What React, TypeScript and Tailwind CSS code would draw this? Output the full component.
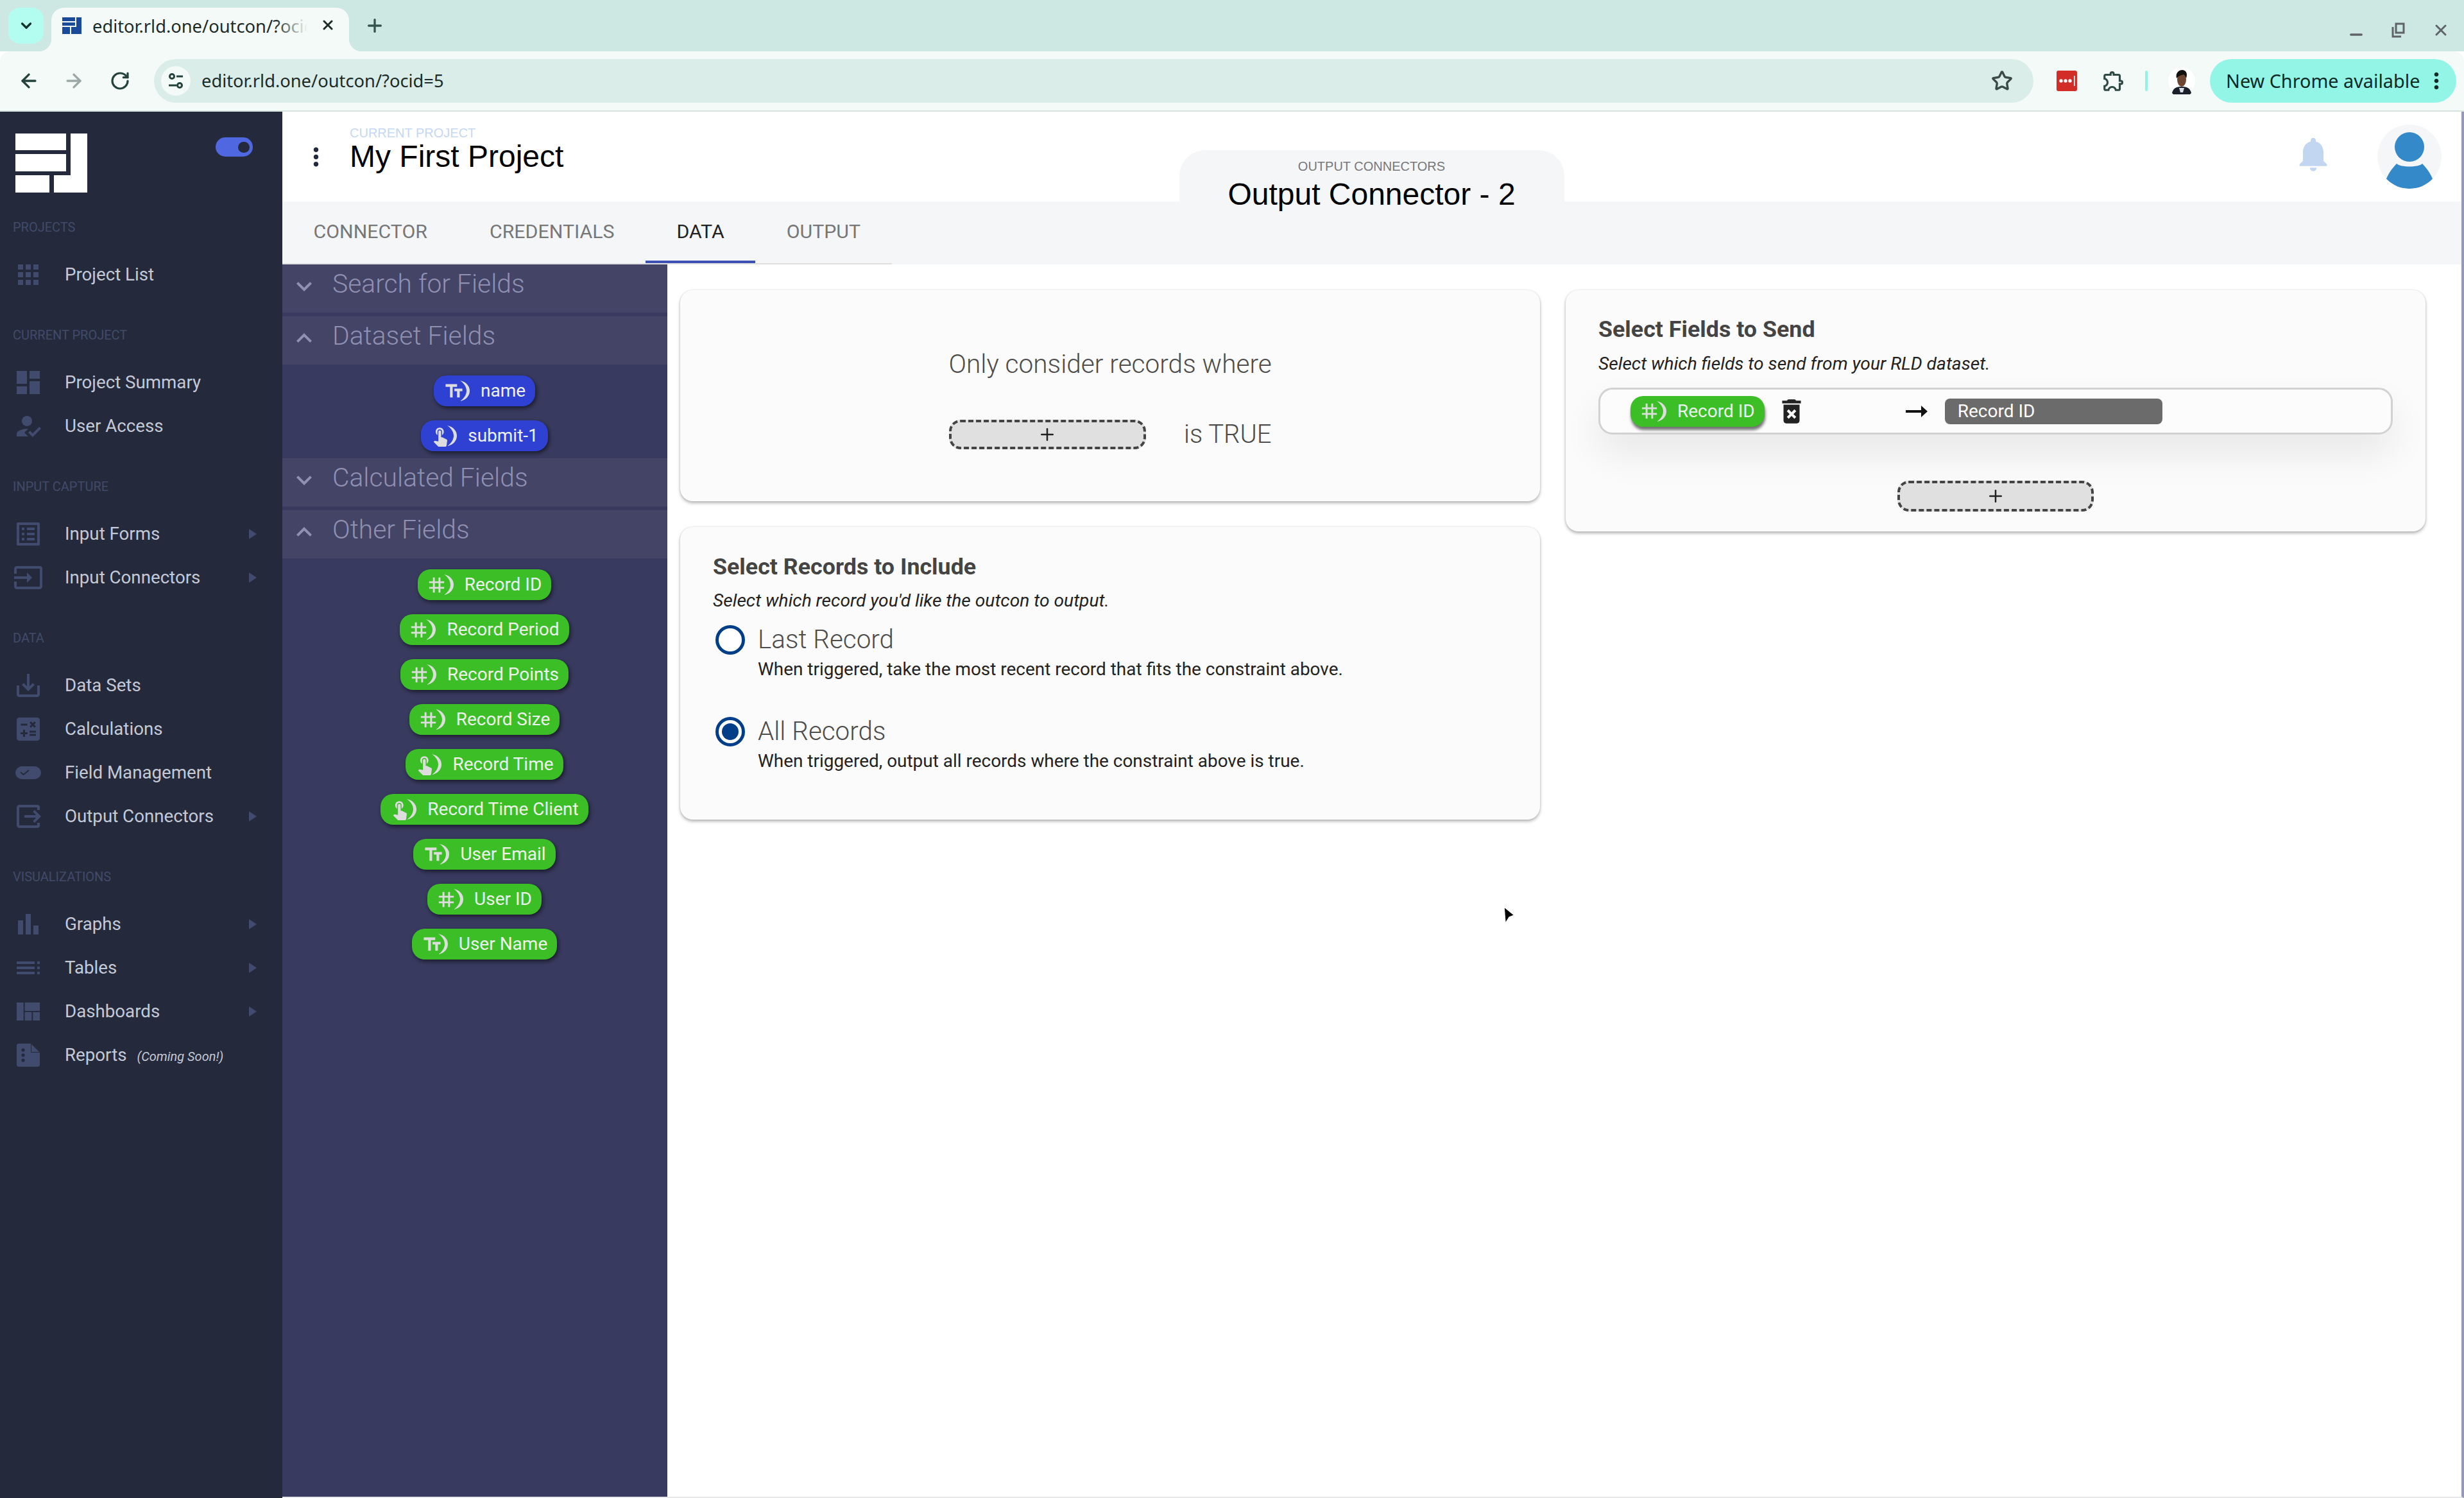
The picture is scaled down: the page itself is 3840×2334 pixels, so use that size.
import React from "react";
import {
  MdApps, MdDashboard, MdHowToReg, MdListAlt, MdInput, MdSaveAlt, MdCalculate, MdOutput,
  MdBarChart, MdViewQuilt, MdTextFields, MdTag, MdTouchApp, MdMoreVert, MdKeyboardArrowDown,
  MdKeyboardArrowUp, MdOutlineExtension, MdNotifications, MdDeleteForever,
} from "react-icons/md";
import { ArrowLeft, ArrowRight, RotateCw, Star, Plus, X, ChevronDown, Minus } from "lucide-react";

const Pill = () => (
  <svg width="40" height="20" viewBox="0 0 40 20" fill="none">
    <rect width="40" height="20" rx="10" fill="#414b6e" />
    <path d="M7 10l4.5 4L20 7" stroke="#242a3c" strokeWidth="1.8" transform="translate(1 -1)" />
  </svg>
);
const TableIcon = () => (
  <svg width="36" height="20" viewBox="0 0 36 20" fill="#414b6e">
    <rect width="28" height="4" x="0" y="0" />
    <rect width="28" height="4" x="0" y="8" />
    <rect width="28" height="4" x="0" y="16" />
    <rect width="4" height="4" x="32" y="0" />
    <rect width="4" height="4" x="32" y="8" />
    <rect width="4" height="4" x="32" y="16" />
  </svg>
);
const ReportIcon = () => (
  <svg width="36" height="36" viewBox="0 0 36 36">
    <path d="M3 0h19l14 14v19a3 3 0 0 1-3 3H3a3 3 0 0 1-3-3V3a3 3 0 0 1 3-3z" fill="#414b6e" />
    <path d="M22 0v14h14z" fill="#242a3c" />
    <path d="M23 1l12 12H23z" fill="#414b6e" />
    <circle cx="10" cy="10" r="2.6" fill="#242a3c" />
    <circle cx="10" cy="18" r="2.6" fill="#242a3c" />
    <circle cx="10" cy="26" r="2.6" fill="#242a3c" />
  </svg>
);

function NavIcon({ children }: { children: React.ReactNode }) {
  return <span className="flex w-[48px] h-[48px] shrink-0 items-center justify-center text-[#414b6e]">{children}</span>;
}

function NavRow({ icon, label, arrow, extra }: { icon: React.ReactNode; label: string; arrow?: boolean; extra?: string }) {
  return (
    <div className="flex h-[68px] items-center pl-[20px] pr-[40px]">
      <NavIcon>{icon}</NavIcon>
      <span className="ml-[33px] text-[27.7px] text-[#c4c9d6]">{label}</span>
      {extra && <span className="ml-[16px] mt-[4px] text-[20px] italic text-[#c4c9d6]">{extra}</span>}
      {arrow && (
        <svg className="ml-auto" width="12" height="16" viewBox="0 0 12 16">
          <path d="M0 0l12 8-12 8z" fill="#414b6e" />
        </svg>
      )}
    </div>
  );
}

function NavLabel({ text }: { text: string }) {
  return <div className="mb-[20px] flex h-[40px] items-center pl-[20px] text-[20px] text-[#414a68]">{text}</div>;
}

function Sidebar() {
  const s = 48;
  return (
    <aside className="flex w-[440px] shrink-0 flex-col bg-[#242a3c]">
      <div className="flex h-[160px] items-start justify-between pl-[24px] pr-[46px] pt-[34px]">
        <svg width="112" height="92" viewBox="0 0 112 92" fill="#fff">
          <rect x="0" y="0" width="79" height="26" />
          <rect x="0" y="32" width="79" height="27" />
          <rect x="0" y="65" width="53" height="27" />
          <path d="M86 0h26v92H60V65h26z" />
        </svg>
        <div className="mt-[6px] flex h-[30px] w-[58px] items-center justify-end rounded-full bg-[#4f67e0] pr-[5px]">
          <div className="h-[17px] w-[18px] rounded-full bg-[#242a3c]" />
        </div>
      </div>
      <div className="flex flex-col gap-[40px]">
        <section>
          <NavLabel text="PROJECTS" />
          <NavRow icon={<MdApps size={48} />} label="Project List" />
        </section>
        <section>
          <NavLabel text="CURRENT PROJECT" />
          <NavRow icon={<MdDashboard size={48} />} label="Project Summary" />
          <NavRow icon={<MdHowToReg size={48} />} label="User Access" />
        </section>
        <section>
          <NavLabel text="INPUT CAPTURE" />
          <NavRow icon={<MdListAlt size={s} />} label="Input Forms" arrow />
          <NavRow icon={<MdInput size={s} />} label="Input Connectors" arrow />
        </section>
        <section>
          <NavLabel text="DATA" />
          <NavRow icon={<MdSaveAlt size={s} />} label="Data Sets" />
          <NavRow icon={<MdCalculate size={s} />} label="Calculations" />
          <NavRow icon={<Pill />} label="Field Management" />
          <NavRow icon={<MdOutput size={s} />} label="Output Connectors" arrow />
        </section>
        <section>
          <NavLabel text="VISUALIZATIONS" />
          <NavRow icon={<MdBarChart size={s} />} label="Graphs" arrow />
          <NavRow icon={<TableIcon />} label="Tables" arrow />
          <NavRow icon={<MdViewQuilt size={s} />} label="Dashboards" arrow />
          <NavRow icon={<ReportIcon />} label="Reports" extra="(Coming Soon!)" />
        </section>
      </div>
    </aside>
  );
}

function ChipIcon({ kind }: { kind: "text" | "num" | "touch" }) {
  return (
    <span className="relative flex h-[36px] w-[38px] shrink-0 items-center text-[#dddddd]">
      {kind === "text" && <span className="-ml-[3px]"><MdTextFields size={33} /></span>}
      {kind === "num" && <span className="-ml-[6px]"><MdTag size={35} /></span>}
      {kind === "touch" && <span className="-ml-[5px]"><MdTouchApp size={34} /></span>}
      <svg className="absolute right-0 top-[2px]" width="16" height="32" viewBox="0 0 16 32">
        <path d="M1 0C11 2 16 9 16 16S11 30 1 32C7 28 11 22 11 16S7 4 1 0z" fill="#dddddd" />
      </svg>
    </span>
  );
}

function Chip({ label, kind, color, strong }: { label: string; kind: "text" | "num" | "touch"; color: string; strong?: boolean }) {
  return (
    <div
      className={`flex h-[48px] items-center rounded-[20px] pl-[18px] pr-[15px] ${color} ${
        strong ? "shadow-[1px_5px_4px_rgba(0,0,0,0.55)]" : "shadow-[2px_3px_6px_rgba(0,0,0,0.55)]"
      }`}
    >
      <ChipIcon kind={kind} />
      <span className="ml-[17px] whitespace-nowrap text-[28px] text-[#eef2ee]">{label}</span>
    </div>
  );
}

function PanelHead({ title, open }: { title: string; open?: boolean }) {
  return (
    <div className="flex h-[75px] items-start bg-[#434466] pl-[10px] text-[#8f90b2]">
      <span className="mt-[10px]">{open ? <MdKeyboardArrowUp size={48} /> : <MdKeyboardArrowDown size={48} />}</span>
      <span className="ml-[20px] mt-[6px] text-[40.8px] font-light leading-[48px]">{title}</span>
    </div>
  );
}

const BLUE = "bg-[#2f41d2]";
const GREEN = "bg-[#3cbf26]";

function FieldPanel() {
  return (
    <div className="w-[600px] shrink-0 bg-[#383a5f]">
      <PanelHead title="Search for Fields" />
      <div className="mt-[6px]">
        <PanelHead title="Dataset Fields" open />
      </div>
      <div className="flex h-[146px] flex-col items-center gap-[22px] pl-[30px] pt-[17px]">
        <Chip label="name" kind="text" color={BLUE} />
        <Chip label="submit-1" kind="touch" color={BLUE} />
      </div>
      <PanelHead title="Calculated Fields" />
      <div className="mt-[6px]">
        <PanelHead title="Other Fields" open />
      </div>
      <div className="flex flex-col items-center gap-[22px] pl-[30px] pt-[17px]">
        <Chip label="Record ID" kind="num" color={GREEN} />
        <Chip label="Record Period" kind="num" color={GREEN} />
        <Chip label="Record Points" kind="num" color={GREEN} />
        <Chip label="Record Size" kind="num" color={GREEN} />
        <Chip label="Record Time" kind="touch" color={GREEN} />
        <Chip label="Record Time Client" kind="touch" color={GREEN} />
        <Chip label="User Email" kind="text" color={GREEN} />
        <Chip label="User ID" kind="num" color={GREEN} />
        <Chip label="User Name" kind="text" color={GREEN} />
      </div>
    </div>
  );
}

function AddButton({ className }: { className: string }) {
  return (
    <div className={`flex items-center justify-center rounded-[18px] border-[4px] border-dashed border-[#444] bg-[#e0e0e0] text-[#222] ${className}`}>
      <Plus size={30} strokeWidth={2} />
    </div>
  );
}

function Radio({ title, desc, on }: { title: string; desc: string; on?: boolean }) {
  return (
    <div className="flex">
      <div className="ml-[4px] mt-[1px] flex h-[46px] w-[46px] shrink-0 items-center justify-center rounded-full border-[5px] border-[#003f88] bg-white">
        {on && <div className="h-[26px] w-[26px] rounded-full bg-[#003f88]" />}
      </div>
      <div className="ml-[20px]">
        <div className="text-[40.4px] font-light leading-[48px] text-[#4c4c4c]">{title}</div>
        <div className="text-[27.95px] leading-[44px] text-[#222]">{desc}</div>
      </div>
    </div>
  );
}

const cardCls = "w-[1340px] rounded-[20px] bg-[#fbfbfb] shadow-[0_3px_5px_rgba(0,0,0,0.28),0_0_3px_rgba(0,0,0,0.12)]";

function Cards() {
  return (
    <div className="flex flex-1 gap-[40px] bg-white pl-[20px] pt-[40px]">
      <div className="flex flex-col gap-[40px]">
        <div className={`${cardCls} flex h-[329px] flex-col items-center pt-[91px]`}>
          <div className="w-[503px] whitespace-nowrap text-[40.6px] font-light leading-[48px] text-[#4c4c4c]">Only consider records where</div>
          <div className="mt-[63px] flex h-[46px] w-[503px] items-center justify-between">
            <AddButton className="h-[46px] w-[307px]" />
            <span className="text-[40px] font-light text-[#4c4c4c]">is TRUE</span>
          </div>
        </div>
        <div className={`${cardCls} h-[456px] pl-[51px] pt-[40px]`}>
          <div className="text-[35.8px] font-bold leading-[44px] text-[#444]">Select Records to Include</div>
          <div className="mt-[13px] text-[28.2px] italic leading-[36px] text-[#222]">Select which record you'd like the outcon to output.</div>
          <div className="mt-[19px] flex flex-col gap-[51px]">
            <Radio title="Last Record" desc="When triggered, take the most recent record that fits the constraint above." />
            <Radio on title="All Records" desc="When triggered, output all records where the constraint above is true." />
          </div>
        </div>
      </div>
      <div className={`${cardCls} h-[376px] pl-[51px] pt-[39px]`}>
        <div className="text-[35.8px] font-bold leading-[44px] text-[#444]">Select Fields to Send</div>
        <div className="mt-[14px] text-[28.2px] italic leading-[36px] text-[#222]">Select which fields to send from your RLD dataset.</div>
        <div className="mt-[19px] flex h-[73px] w-[1238px] items-center rounded-[22px] border-[3px] border-[#d2d2d2] bg-[#fcfcfc] pl-[47px] shadow-[0_30px_60px_rgba(0,0,0,0.08)]">
          <Chip label="Record ID" kind="num" color={GREEN} strong />
          <span className="ml-[17px] text-[#222]"><MdDeleteForever size={50} /></span>
          <svg className="ml-[153px]" width="34" height="20" viewBox="0 0 34 20" fill="#111">
            <path d="M0 8h24V1l10 9-10 9v-7H0z" />
          </svg>
          <div className="ml-[27px] flex h-[40px] w-[339px] items-center rounded-[8px] bg-[#6b6b6b] pl-[20px] text-[28px] text-white">Record ID</div>
        </div>
        <div className="mt-[72px] flex w-[1238px] justify-center">
          <AddButton className="h-[48px] w-[306px]" />
        </div>
      </div>
    </div>
  );
}

function TopBar() {
  return (
    <div className="flex h-[140px] bg-white [font-family:'Liberation_Sans',sans-serif]">
      <div className="flex flex-1 basis-0 pl-[30px]">
        <span className="mt-[48px] h-[45px] text-[#222a3c]"><MdMoreVert size={45} /></span>
        <div className="ml-[30px] pt-[23px]">
          <div className="text-[20px] leading-[20px] text-[#c5d7f2]">CURRENT PROJECT</div>
          <div className="-mt-[1px] text-[48px] leading-[56px] text-black">My First Project</div>
        </div>
      </div>
      <div className="relative z-10 flex h-[80px] w-[600px] flex-col items-center self-end rounded-t-[40px] bg-[#f5f6f8] pt-[16px]">
        <div className="text-[20px] leading-[18px] text-[#777]">OUTPUT CONNECTORS</div>
        <div className="mt-[7px] whitespace-nowrap text-[48px] leading-[56px] text-black">Output Connector - 2</div>
      </div>
      <div className="flex flex-1 basis-0 items-start justify-end gap-[68px] pr-[31px] pt-[20px]">
        <span className="mt-[14px] text-[#c2d6f2]"><MdNotifications size={64} /></span>
        <div className="flex h-[100px] w-[100px] items-center justify-center overflow-hidden rounded-full bg-[#f5f6f8]">
          <svg width="100" height="100" viewBox="0 0 100 100" fill="#3489c9">
            <ellipse cx="50" cy="35" rx="23" ry="23" />
            <path d="M30 61c6 6 34 6 40 0 8 8 16 20 18 30-8 5-24 9-38 9s-30-4-38-9c2-10 10-22 18-30z" />
          </svg>
        </div>
      </div>
    </div>
  );
}

function Tabs() {
  const tabs = ["CONNECTOR", "CREDENTIALS", "DATA", "OUTPUT"];
  return (
    <div className="h-[98px] bg-[#f5f6f8]">
      <div className="inline-flex border-b-[2px] border-[#e0e0e0]">
        {tabs.map((t) => (
          <div key={t} className={`relative flex h-[96px] items-center px-[48.5px] pb-[2px] text-[30.3px] ${t === "DATA" ? "text-[#222]" : "text-[#777]"}`}>
            {t}
            {t === "DATA" && <div className="absolute bottom-0 left-0 right-0 h-[4px] bg-[#3f51b5]" />}
          </div>
        ))}
      </div>
    </div>
  );
}

function Chrome() {
  return (
    <div className="[font-family:'Noto_Sans',sans-serif]">
      <div className="flex h-[80px] items-start bg-[#cde8e2] pt-[12px]">
        <div className="ml-[13px] flex h-[56px] w-[55px] items-center justify-center rounded-[18px] bg-[#b3fcf0] text-[#12312b]">
          <ChevronDown size={26} strokeWidth={3} />
        </div>
        <div className="relative ml-[12px] flex h-[68px] w-[464px] items-start rounded-t-[20px] bg-[#f4faf8] pl-[17px] pt-[9px]">
          <div className="absolute -left-[20px] bottom-0 h-[20px] w-[20px] bg-[radial-gradient(circle_at_0_0,transparent_20px,#f4faf8_20.5px)]" />
          <div className="absolute -right-[20px] bottom-0 h-[20px] w-[20px] bg-[radial-gradient(circle_at_100%_0,transparent_20px,#f4faf8_20.5px)]" />
          <svg className="mt-[6px]" width="30" height="26" viewBox="0 0 30 26" fill="#1a4b9b">
            <path d="M0 0h20v6H0zM0 8h20v5H0zM0 15h12v11H0zM22 0h8v26H14V15h8z" />
          </svg>
          <div className="relative ml-[17px] h-[40px] w-[335px] overflow-hidden whitespace-nowrap text-[27.3px] leading-[40px] text-[#1c2b28]">
            editor.rld.one/outcon/?ocid
            <div className="absolute bottom-0 right-0 top-0 w-[50px] bg-gradient-to-r from-transparent to-[#f4faf8]" />
          </div>
          <X className="ml-[20px] mt-[6px] text-[#1c2b28]" size={24} strokeWidth={3} />
        </div>
        <Plus className="ml-[24px] mt-[12px] text-[#35544d]" size={32} strokeWidth={2.5} />
        <div className="ml-auto flex items-center gap-[40px] pr-[22px] pt-[14px] text-[#5f6368]">
          <Minus size={28} strokeWidth={3} className="mt-[14px]" />
          <svg width="24" height="24" viewBox="0 0 24 24" fill="none" stroke="#5f6368" strokeWidth="3">
            <path d="M8 2h12v14H8zM3 7v15h13" />
          </svg>
          <X size={28} strokeWidth={2.5} />
        </div>
      </div>
      <div className="flex h-[92px] items-center rounded-t-[16px] bg-[#f4faf8] pl-[28px] pr-[12px]">
        <ArrowLeft size={34} strokeWidth={2.4} className="text-[#23423c]" />
        <ArrowRight size={34} strokeWidth={2.4} className="ml-[36px] text-[#9ba8a5]" />
        <RotateCw size={32} strokeWidth={2.4} className="ml-[39px] text-[#23423c]" />
        <div className="ml-[37px] flex h-[68px] w-[927px] flex-1 items-center rounded-full bg-[#daede8] pl-[11px] pr-[32px]">
          <div className="flex h-[46px] w-[46px] items-center justify-center rounded-full bg-[#f4faf8]">
            <svg width="26" height="26" viewBox="0 0 26 26" fill="none" stroke="#23423c" strokeWidth="3">
              <circle cx="7" cy="6" r="3.5" />
              <circle cx="19" cy="20" r="3.5" />
              <path d="M14 6h10M2 20h12" />
            </svg>
          </div>
          <span className="ml-[17px] text-[27.3px] text-[#1c2b28]">editor.rld.one/outcon/?ocid=5</span>
          <Star size={34} strokeWidth={2.4} className="ml-auto text-[#3c4a47]" />
        </div>
        <svg className="ml-[36px]" width="32" height="32" viewBox="0 0 32 32">
          <rect width="32" height="32" rx="3" fill="#d32d27" />
          <circle cx="7" cy="16" r="2.7" fill="#fff" />
          <circle cx="14" cy="16" r="2.7" fill="#fff" />
          <circle cx="21" cy="16" r="2.7" fill="#fff" />
          <rect x="27" y="8" width="1.5" height="16" fill="#fff" />
        </svg>
        <span className="ml-[38px] text-[#2f4a45]"><MdOutlineExtension size={38} /></span>
        <div className="ml-[30px] h-[32px] w-[4px] rounded bg-[#92f5e4]" />
        <svg className="ml-[32px]" width="42" height="42" viewBox="0 0 42 42">
          <circle cx="21" cy="21" r="21" fill="#fff" />
          <path d="M6 40c2-8 7-10 15-10s13 2 15 10a20 20 0 0 1-30 0z" fill="#1b1f29" />
          <ellipse cx="21" cy="19" rx="7" ry="11" fill="#6d4632" />
          <path d="M13 17c-2-9 4-13 9-13s9 5 6 13c-1-3-2-5-4-6-3 1-8 2-11 6z" fill="#12100f" />
          <path d="M17 32h8l-2 7h-4z" fill="#d6dbe6" />
        </svg>
        <div className="ml-[23px] flex h-[68px] w-[384px] items-center rounded-full bg-[#93f5e6] pl-[25px] text-[#0f2a26]">
          <span className="whitespace-nowrap text-[28.8px]">New Chrome available</span>
          <MdMoreVert size={40} className="ml-[6px]" />
        </div>
      </div>
      <div className="h-[2px] bg-[#d7e4e0]" />
    </div>
  );
}

export default function App() {
  return (
    <div className="relative flex h-[2334px] w-[3840px] flex-col overflow-hidden bg-white [font-family:Roboto,sans-serif]">
      <Chrome />
      <div className="flex min-h-0 flex-1">
        <Sidebar />
        <main className="flex min-w-0 flex-1 flex-col border-b-[2px] border-r-[4px] border-b-[#e8e8e8] border-r-[#9598b8]">
          <TopBar />
          <Tabs />
          <div className="flex min-h-0 flex-1">
            <FieldPanel />
            <Cards />
          </div>
        </main>
      </div>
      <svg className="absolute left-[2342px] top-[1411px]" width="20" height="30" viewBox="0 0 20 30">
        <path d="M2 2l16 13-8 3-6 10z" fill="#000" stroke="#fff" strokeWidth="1.5" />
      </svg>
    </div>
  );
}
